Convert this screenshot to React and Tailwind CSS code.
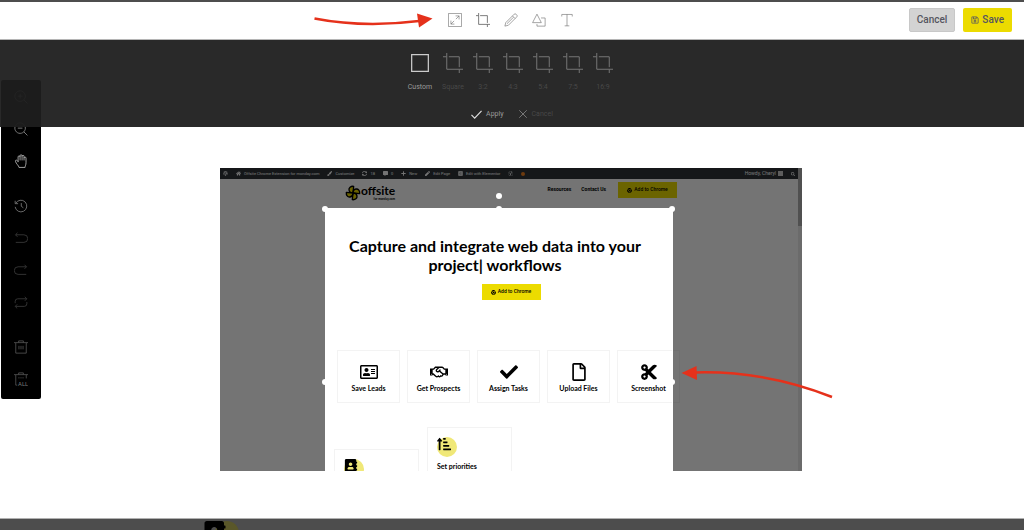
import {
    FaAddressBook, FaChrome, FaCheck, FaCommentAlt, FaCut, FaElementor, FaHome, FaPaintBrush, FaPen,
    FaPlus, FaRegAddressCard, FaRegFile, FaRegHandshake, FaRegSave, FaSearch, FaSortAmountUpAlt,
    FaSyncAlt, FaWordpress, FaYoast,
} from 'react-icons/fa';

// --- Line icons, all drawn in a 24px box ---
const Icon = ({ children, className }) => (
    <svg viewBox="0 0 24 24" fill="none" stroke="currentColor" className={className} aria-hidden="true">
        {children}
    </svg>
);

const CropPaths = () => <path d="M0 4.5H4M7 4.5H19.5V17M4.5 0V19.5H24M19.5 20V24" />;

const TOOLS = [
    { name: 'Resize', color: 'text-[#666666]', art: <path d="M.8.8H23.2V23.2H.8ZM5 19L10.5 13.5M13.5 10.5L19 5M13 5H19V11M5 13V19H11" /> },
    { name: 'Crop', color: 'text-[#222222]', art: <CropPaths /> },
    { name: 'Draw', color: 'text-[#666666]', art: <path d="M1.5 22.5L3 16.5L17.5 2A2.2 2.2 0 0 1 20.5 2L22 3.5A2.2 2.2 0 0 1 22 6.5L7.5 21ZM14.5 5L19 9.5M5 18.5L16 7.5" /> },
    { name: 'Shape', color: 'text-[#666666]', art: <path d="M8.5 2L16 16.5H1ZM15.5 8.5H22.5V22.5H8.5V19" /> },
    { name: 'Text', color: 'text-[#666666]', art: <path d="M3 6V2.5H21V6M12 2.5V22M8 22H16" /> },
];

const RATIOS = ['Square', '3:2', '4:3', '5:4', '7:5', '16:9'];

const ARROW_UNDO = 'M6 3L2.5 6.5L6 10M3 6.5H17A6 6 0 0 1 17 19.5H3';

const SIDE_GROUPS = [
    [
        { name: 'Zoom in', color: 'text-[#a0a0a0]', art: <path d="M10.5 1.5A9 9 0 1 1 10.4 1.5ZM17 17L23 23M10.5 6.5V14.5M6.5 10.5H14.5" strokeWidth="1.5" /> },
        { name: 'Zoom out', color: 'text-[#888888]', art: <path d="M10.5 1.5A9 9 0 1 1 10.4 1.5ZM17 17L23 23M6.5 10.5H14.5" strokeWidth="1.5" /> },
        { name: 'Hand', color: 'text-[#b5b5b5]', art: <path d="M7 14V5A1.7 1.7 0 0 1 10.4 5V11M10.4 5V3A1.7 1.7 0 0 1 13.8 3V11M13.8 4A1.7 1.7 0 0 1 17.2 4V11M17.2 7A1.7 1.7 0 0 1 20.6 7V15C20.6 19 19 20 19 23H8.5C8.5 20 3.5 17 2.5 12.5C2 10 5 9.5 7 13" strokeWidth="1.5" /> },
    ],
    [
        { name: 'History', color: 'text-[#777777]', art: <path d="M3 7.5A10 10 0 1 1 2 13.5M2 3V8H7M12.5 7V12.5L16 15" strokeWidth="1.5" /> },
        { name: 'Undo', color: 'text-[#555555]', art: <path d={ARROW_UNDO} /> },
        { name: 'Redo', color: 'text-[#555555]', art: <path d={ARROW_UNDO} transform="translate(24 0) scale(-1 1)" /> },
        { name: 'Reset', color: 'text-[#555555]', art: <path d="M2 14V11A4.5 4.5 0 0 1 6.5 6.5H21M18.5 3L22 6.5L18.5 10M22 12V15A4.5 4.5 0 0 1 17.5 19.5H3M5.5 16L2 19.5L5.5 23" /> },
    ],
    [
        { name: 'Delete', color: 'text-[#777777]', art: <path d="M0 4.5H24M8 4V1.5H16V4M3 5V22.5H21V5M8.5 10V16M12 10V16M15.5 10V16" /> },
        {
            name: 'Delete all',
            color: 'text-[#777777]',
            art: (
                <>
                    <path d="M0 4.5H24M8 4V1.5H16V4M3 5V22.5H5.5M21 5V11M8.5 9V11M12 9V11M15.5 9V11" />
                    <text x="7" y="24" fontSize="10" fontFamily="Roboto, sans-serif" fontWeight="400" fill="currentColor" stroke="none">ALL</text>
                </>
            ),
        },
    ],
];

const FEATURES = [
    { label: 'Save Leads', icon: FaRegAddressCard },
    { label: 'Get Prospects', icon: FaRegHandshake },
    { label: 'Assign Tasks', icon: FaCheck },
    { label: 'Upload Files', icon: FaRegFile },
    { label: 'Screenshot', icon: FaCut },
];

const ADMIN_ITEMS = [
    { icon: FaWordpress },
    { icon: FaHome, label: 'Offsite Chrome Extension for monday.com' },
    { icon: FaPaintBrush, label: 'Customize' },
    { icon: FaSyncAlt, label: '18' },
    { icon: FaCommentAlt, label: '0' },
    { icon: FaPlus, label: 'New' },
    { icon: FaPen, label: 'Edit Page' },
    { icon: FaElementor, label: 'Edit with Elementor' },
    { icon: FaYoast },
];

const TopBar = () => (
    <header className="flex h-[38px] items-center border-b border-[#b5b5b5] bg-white pb-[2px]">
        <div className="flex-1 pl-[10px]" />
        <div className="flex">
            {TOOLS.map((tool) => (
                <button key={tool.name} aria-label={tool.name} className={`flex w-7 justify-center ${tool.color}`}>
                    <Icon className="size-[14px]">{tool.art}</Icon>
                </button>
            ))}
        </div>
        <div className="flex flex-1 justify-end gap-2 pr-3 text-[10px] font-medium text-[#555560]">
            <button className="h-6 rounded-xs border border-[#c8c8c8] bg-[#d3d3d3] px-[7px]">Cancel</button>
            <button className="flex h-6 items-center gap-[3px] rounded-xs bg-[#ecdb00] px-2">
                <FaRegSave className="size-2" />
                Save
            </button>
        </div>
    </header>
);

const CropMenu = () => (
    <section className="relative z-20 flex h-[87px] flex-col items-center bg-[#1d1d1d]/95 pt-[13px] text-[7px]">
        <div className="flex pr-1">
            <button className="flex w-9 flex-col items-center gap-[9px] text-[#9a9a9a]">
                <Icon className="size-5 text-[#cccccc]"><path d="M2 2H22V22H2Z" strokeWidth="1.5" /></Icon>
                Custom
            </button>
            {RATIOS.map((ratio) => (
                <button key={ratio} className="flex w-[30px] flex-col items-center gap-[9px] text-[#484848]">
                    <Icon className="size-5 text-[#858585]"><CropPaths /></Icon>
                    {ratio}
                </button>
            ))}
        </div>
        <div className="mt-4 flex gap-[14px]">
            <button className="flex items-center gap-1 text-[#9a9a9a]">
                <Icon className="size-[11px] text-[#e0e0e0]"><path d="M1 13L8 20L23 4" strokeWidth="2.5" /></Icon>
                Apply
            </button>
            <button className="flex items-center gap-1 text-[#484848]">
                <Icon className="size-[10px] text-[#858585]"><path d="M3 3L21 21M21 3L3 21" strokeWidth="2" /></Icon>
                Cancel
            </button>
        </div>
    </section>
);

const SideBar = () => (
    <aside className="absolute top-20 left-px z-10 flex w-10 flex-col gap-[13px] rounded-xs bg-black pt-px pb-1">
        {SIDE_GROUPS.map((group) => (
            <div key={group[0].name}>
                {group.map((tool) => (
                    <button key={tool.name} aria-label={tool.name} className={`flex h-8 w-full items-center justify-center ${tool.color}`}>
                        <Icon className="size-[14px]">{tool.art}</Icon>
                    </button>
                ))}
            </div>
        ))}
    </aside>
);

const ChromeButton = () => (
    <a href="#chrome" className="flex h-4 w-[59px] items-center justify-center gap-[2px] bg-[#ecdb00] text-[5px] font-medium text-black">
        <FaChrome className="size-[5px]" />
        Add to Chrome
    </a>
);

const Petal = ({ turn }) => (
    <path
        d="M12 12L13 2C8.5 1.5 5.5 4 6 7.500C6.500 10.500 9 12 12 12Z"
        fill="#e8d800"
        stroke="#000000"
        strokeWidth="2"
        strokeLinejoin="round"
        transform={`rotate(${turn} 12 12)`}
    />
);

const handle = 'absolute size-[6px] rounded-full bg-white';

// The crop window dims everything around it through its shadow
const Selection = () => (
    <div className="absolute top-10 left-[105px] h-[348px] w-[348px] border border-white shadow-[0_0_0_999px_rgba(0,0,0,0.545)]">
        <span className={`${handle} -top-4 left-[170px]`} />
        <span className={`${handle} -top-[3px] -left-1`} />
        <span className={`${handle} -top-[3px] left-[170px]`} />
        <span className={`${handle} -top-[3px] -right-[3px]`} />
        <span className={`${handle} top-[170px] -left-1`} />
        <span className={`${handle} top-[170px] -right-[3px]`} />
    </div>
);

const PagePreview = () => (
    <div className="relative mx-auto h-[303px] w-[582px] max-w-full overflow-hidden bg-white text-black">
        <div className="flex h-[11px] items-center gap-2 bg-[#2e3338] px-[3px] text-[4px] whitespace-nowrap text-white">
            {ADMIN_ITEMS.map(({ icon: ItemIcon, label }, i) => (
                <span key={i} className="flex items-center gap-[3px]">
                    <ItemIcon className="size-[5px]" />
                    {label}
                </span>
            ))}
            <span className="size-1 rounded-full bg-[#f08020]" />
            <span className="flex-1" />
            <span className="flex items-center gap-[2px] text-[5px]">
                Howdy, Cheryl
                <span className="size-[5px] bg-[#cccccc]" />
            </span>
            <FaSearch className="mr-1 size-1" />
        </div>
        <div className="flex h-[29px] items-start justify-between px-[125px] pt-[3px]">
            <div className="flex items-center pt-[2px]">
                <svg viewBox="0 0 24 24" className="size-4" aria-hidden="true">
                    <Petal turn={0} />
                    <Petal turn={90} />
                    <Petal turn={180} />
                    <Petal turn={270} />
                </svg>
                <div className="flex flex-col items-end font-[Lato,sans-serif]">
                    <span className="text-[12px] leading-[14px] font-bold">offsite</span>
                    <span className="text-[3px] leading-[3px] font-bold">for monday.com</span>
                </div>
            </div>
            <nav className="flex h-4 items-center gap-[10px] text-[5px] font-bold">
                <a href="#resources">Resources</a>
                <a href="#contact" className="mr-[2px]">Contact Us</a>
                <ChromeButton />
            </nav>
        </div>
        <div className="flex flex-col items-center pt-7 font-[Lato,sans-serif]">
            <h1 className="pr-8 text-center text-[16px] leading-[19px] font-bold">
                Capture and integrate web data into your
                <br />
                project| workflows
            </h1>
            <div className="mt-[10px] font-[Roboto,sans-serif]"><ChromeButton /></div>
            <div className="mt-[50px] flex gap-[7px] pr-[5px]">
                {FEATURES.map(({ label, icon: FeatureIcon }) => (
                    <div key={label} className="flex h-[53px] w-[63px] flex-col items-center border border-[#f3f3f3] pt-3 text-[7px] leading-[9px] font-bold whitespace-nowrap">
                        <FeatureIcon className="mb-[3px] size-[18px]" />
                        {label}
                    </div>
                ))}
            </div>
        </div>
        <div className="mt-6 flex gap-2 pl-[114px] font-[Lato,sans-serif] text-[7px] leading-[9px] font-bold">
            <div className="mt-[22px] h-20 w-[85px] border border-[#f3f3f3] p-[9px]">
                <div className="relative">
                    <span className="absolute top-0 left-0 size-5 rounded-full bg-[#f0e878]" />
                    <FaAddressBook className="relative size-[14px]" />
                </div>
            </div>
            <div className="h-20 w-[85px] border border-[#f3f3f3] p-[9px]">
                <div className="relative h-[25px]">
                    <span className="absolute top-0 left-0 size-5 rounded-full bg-[#f0e878]" />
                    <FaSortAmountUpAlt className="relative size-[14px]" />
                </div>
                Set priorities
            </div>
        </div>
        <Selection />
        <div className="absolute top-0 right-0 h-full w-1 bg-[#6b6b6b]">
            <div className="h-[58px] bg-[#505050]" />
        </div>
    </div>
);

const Annotations = () => (
    <>
        <svg viewBox="0 0 120 20" fill="#e5311b" className="absolute top-[10px] left-[313px] z-30 h-5 w-[120px]" aria-hidden="true">
            <path d="M1.5 8.5Q50 18 106 11" fill="none" stroke="#e5311b" strokeWidth="2.5" />
            <path d="M104 3.5L106 17.5L119.5 8.5Z" />
        </svg>
        <svg viewBox="0 0 152 34" fill="#e5311b" className="absolute top-[365px] left-[681px] z-30 h-[34px] w-[152px]" aria-hidden="true">
            <path d="M14 7.5Q84 5.5 151 32" fill="none" stroke="#e5311b" strokeWidth="2.5" />
            <path d="M.5 8L15.5 1L16 15Z" />
        </svg>
    </>
);

export default function App() {
    return (
        <div className="relative flex min-h-screen flex-col overflow-hidden bg-[#4d4d4d] pt-[2px] font-[Roboto,sans-serif]">
            <TopBar />
            <div className="flex flex-1 flex-col bg-white">
                <CropMenu />
                <main className="flex-1 pt-[41px] pb-[47px] pr-[2px]">
                    <PagePreview />
                </main>
            </div>
            <SideBar />
            {/* strip of the dimmed page below the editor */}
            <div className="flex h-3 overflow-hidden border-t border-[#b0b0b0] pl-[203px]">
                <div className="relative h-6 w-9 pt-[2px]">
                    <span className="absolute top-[2px] left-3 size-6 rounded-full bg-[#5a5729]" />
                    <FaAddressBook className="relative size-6 text-black" />
                </div>
            </div>
            <Annotations />
        </div>
    );
}
